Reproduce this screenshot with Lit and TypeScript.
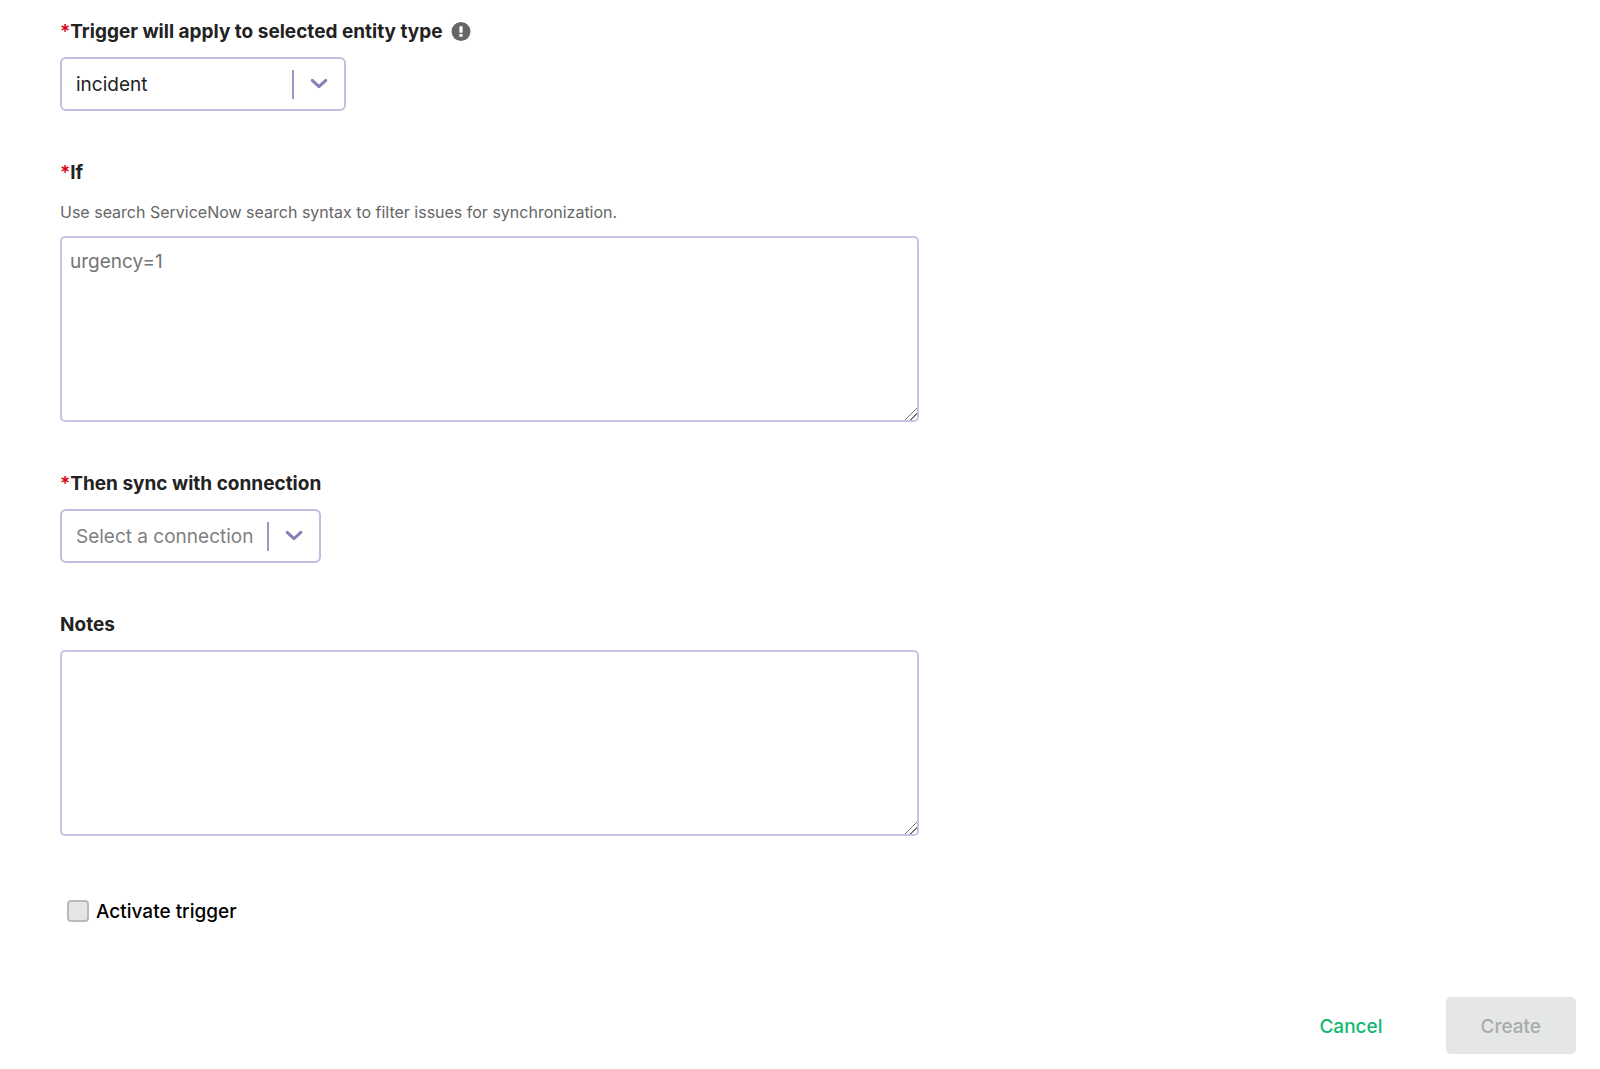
import { LitElement, html, svg, css } from "lit";
import { customElement } from "lit/decorators.js";

const chevron = svg`<svg class="chevron" viewBox="0 0 18 12" width="18" height="12" aria-hidden="true"><path d="M2.2 2.4 9 8.6l6.8-6.2" /></svg>`;
const alertIcon = svg`<svg class="alert" viewBox="0 0 20 20" width="20" height="20" role="img" aria-label="More information"><circle cx="10" cy="9.5" r="9.5" fill="#666" /><rect x="8.4" y="4.2" width="3.2" height="6.6" rx="0.6" fill="#fff" /><rect x="8.4" y="12" width="3.2" height="2.8" rx="0.6" fill="#fff" /></svg>`;

@customElement("app-root")
export class AppRoot extends LitElement {
  static styles = css`
    :host { display: block; background: #fff; color: #222; font: 19px/24px Inter, "Liberation Sans", sans-serif; }
    * { box-sizing: border-box; }
    .form { display: flex; flex-direction: column; padding: 20px 24px 14px 60px; }
    .field { display: flex; flex-direction: column; align-items: flex-start; margin-bottom: 50px; }
    .title { display: flex; align-items: center; gap: 8px; margin-bottom: 13px; }
    .label { font-weight: 700; }
    .req { color: #d80012; font-weight: 600; }
    .alert { display: block; }
    .hint { margin: 2px 0 12px; color: #666; font-size: 16px; }
    .area { display: block; width: 100%; max-width: 859px; height: 186px; padding: 12px 8px; border: 2px solid #c6c4e2; border-radius: 5px; background: #fff; color: #222; font: inherit; resize: both; }
    .area::placeholder { color: #757575; opacity: 1; }
    .area::-webkit-resizer { background: linear-gradient(315deg, transparent 4px, #777 4px, #777 5px, transparent 5px, transparent 8px, #777 8px, #777 9px, transparent 9px); }
    .picker { display: grid; grid-template-columns: 1fr 52px; align-items: center; height: 54px; border: 2px solid #c0bede; border-radius: 6px; }
    .wide { width: 286px; }
    .narrow { width: 261px; }
    .select { grid-area: 1 / 1 / 2 / 3; width: 100%; height: 100%; appearance: none; border: 0; background: none; padding: 2px 54px 0 14px; font: inherit; color: #222; }
    .select:invalid { color: #808080; }
    .arrow { grid-area: 1 / 2; height: 29px; border-left: 2px solid #9a97cb; display: grid; place-items: center; pointer-events: none; }
    .chevron { display: block; fill: none; stroke: #8480b8; stroke-width: 3; stroke-linecap: round; stroke-linejoin: round; }
    .check { display: flex; align-items: center; align-self: flex-start; gap: 7px; margin-top: 12px; padding-left: 7px; color: #000; font-weight: 500; }
    .caption { padding-top: 2px; }
    .box { appearance: none; flex: none; margin: 0; width: 22px; height: 22px; border: 2px solid #bababa; border-radius: 4px; background: #e5e5e5; }
    .actions { display: flex; justify-content: flex-end; gap: 28px; margin-top: 73px; }
    .btn { height: 57px; padding: 2px 35px 0; border: 0; border-radius: 5px; background: none; color: #13b870; font: inherit; font-weight: 500; }
    .btn:disabled { background: #e5e7e6; color: #a9abaa; }
  `;

  render() {
    return html`<form class="form">
      <div class="field">
        <div class="title"><label class="label" for="entity"><span class="req">*</span>Trigger will apply to selected entity type</label>${alertIcon}</div>
        <div class="picker wide">
          <select class="select" id="entity"><option>incident</option></select>
          <span class="arrow">${chevron}</span>
        </div>
      </div>
      <div class="field">
        <div class="title"><label class="label" for="condition"><span class="req">*</span>If</label></div>
        <p class="hint" id="condition-hint">Use search ServiceNow search syntax to filter issues for synchronization.</p>
        <textarea class="area" id="condition" aria-describedby="condition-hint" placeholder="urgency=1"></textarea>
      </div>
      <div class="field">
        <div class="title"><label class="label" for="connection"><span class="req">*</span>Then sync with connection</label></div>
        <div class="picker narrow">
          <select class="select" id="connection" required><option value="">Select a connection</option></select>
          <span class="arrow">${chevron}</span>
        </div>
      </div>
      <div class="field">
        <div class="title"><label class="label" for="notes">Notes</label></div>
        <textarea class="area" id="notes"></textarea>
      </div>
      <label class="check"><input class="box" type="checkbox" /><span class="caption">Activate trigger</span></label>
      <div class="actions">
        <button class="btn" type="button">Cancel</button>
        <button class="btn" type="submit" disabled>Create</button>
      </div>
    </form>`;
  }
}
